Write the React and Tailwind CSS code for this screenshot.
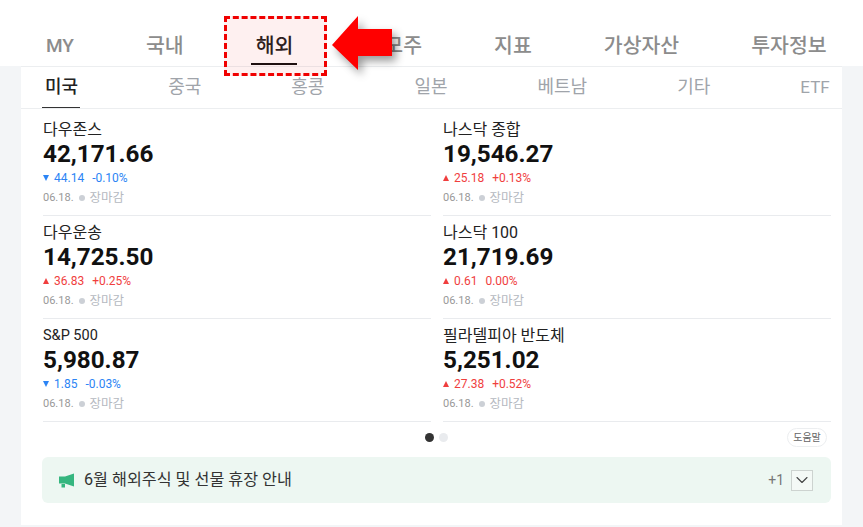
import { ChevronDown } from 'lucide-react'

const mainTabs = ['MY', '국내', '해외', '공모주', '지표', '가상자산', '투자정보']
const subTabs = ['미국', '중국', '홍콩', '일본', '베트남', '기타', 'ETF']

const markets = [
  { name: '다우존스', value: '42,171.66', diff: '44.14', rate: '-0.10%', up: false },
  { name: '나스닥 종합', value: '19,546.27', diff: '25.18', rate: '+0.13%', up: true },
  { name: '다우운송', value: '14,725.50', diff: '36.83', rate: '+0.25%', up: true },
  { name: '나스닥 100', value: '21,719.69', diff: '0.61', rate: '0.00%', up: true },
  { name: 'S&P 500', value: '5,980.87', diff: '1.85', rate: '-0.03%', up: false, latin: true },
  { name: '필라델피아 반도체', value: '5,251.02', diff: '27.38', rate: '+0.52%', up: true },
]

function MarketCell({ name, value, diff, rate, up, latin }) {
  return (
    <div className="flex h-[103px] flex-col border-b border-[#e9ebee] pt-[7px]">
      <div className={`leading-[20px] text-[#222] ${latin ? 'text-[14.5px]' : 'text-[16px]'}`}>{name}</div>
      <div className="text-[24.25px] font-bold leading-[28px] text-[#111]">{value}</div>
      <div
        className={`mt-[1px] flex items-center text-[12px] leading-[18px] ${
          up ? 'text-[#f03e3e]' : 'text-[#2b84f5]'
        }`}
      >
        <span
          className={`mr-[5px] h-0 w-0 border-x-[3.5px] border-x-transparent ${
            up ? 'border-b-[6px] border-b-[#f03e3e]' : 'border-t-[6px] border-t-[#2b84f5]'
          }`}
        />
        <span>{diff}</span>
        <span className="ml-[8px]">{rate}</span>
      </div>
      <div className="mt-[2px] flex items-center text-[11px] leading-[18px] text-[#999]">
        <span>06.18.</span>
        <span className="mx-[5px] h-[6px] w-[6px] rounded-full bg-[#ccd0d6]" />
        <span className="text-[12.5px] text-[#b5b9bf]">장마감</span>
      </div>
    </div>
  )
}

export default function App() {
  return (
    <div className="relative h-[527px] w-[863px] overflow-hidden bg-white font-['Roboto','Noto_Sans_CJK_KR',sans-serif]">
      <div className="flex h-[66px] gap-[72px] pl-[46px] pt-[32px]">
        {mainTabs.map((tab) => (
          <div
            key={tab}
            className={`relative whitespace-nowrap font-medium leading-[28px] ${
              tab === 'MY' ? 'text-[19px]' : 'text-[20.5px]'
            } ${tab === '해외' ? 'text-[#222]' : 'text-[#8c8c8c]'}`}
          >
            {tab}
            {tab === '해외' && (
              <span className="absolute -left-[5px] -right-[4px] top-[31px] h-[2px] bg-[#111]" />
            )}
          </div>
        ))}
      </div>

      <div className="flex h-[461px] bg-[#f3f5f7] px-[21px] pb-[2px]">
        <div className="w-[821px] border-t border-[#eceef0] bg-white">
          <div className="flex h-[42px] gap-[90px] border-b border-[#eceef0] pl-[24px]">
            {subTabs.map((tab, i) => (
              <div
                key={tab}
                className={`relative whitespace-nowrap pt-[8px] leading-[24px] ${
                  tab === 'ETF' ? 'text-[17px]' : 'text-[18px]'
                } ${i === 0 ? 'font-medium text-[#222]' : 'text-[#a0a4aa]'}`}
              >
                {tab}
                {i === 0 && (
                  <span className="absolute -left-[3px] -right-[2px] top-[40px] h-[1px] bg-[#333]" />
                )}
              </div>
            ))}
          </div>

          <div className="mt-[4px] grid grid-cols-[388px_388px] gap-x-[12px] pl-[22px]">
            {markets.map((m) => (
              <MarketCell key={m.name} {...m} />
            ))}
          </div>

          <div className="relative flex h-[35px] items-center justify-center gap-[5px] pb-[4px] pl-[9px]">
            <span className="h-[9px] w-[9px] rounded-full bg-[#333]" />
            <span className="h-[9px] w-[9px] rounded-full bg-[#e9ebee]" />
            <span className="absolute right-[15px] top-[6px] flex h-[19px] w-[40px] items-center justify-center rounded-full border border-[#eceef0] text-[10px] text-[#666]">
              도움말
            </span>
          </div>

          <div className="ml-[21px] flex h-[46px] w-[789px] items-center rounded-[6px] bg-[#edf7f2] pl-[17px] pr-[18px]">
            <svg width="15" height="15" viewBox="0 0 15 15" className="mr-[10px]">
              <path d="M0 3.5h6L15 .5v13L6 10.5H0z" fill="#35b67f" />
              <rect x="2.5" y="11" width="3.5" height="3.5" fill="#35b67f" />
            </svg>
            <span className="text-[16.2px] text-[#333]">6월 해외주식 및 선물 휴장 안내</span>
            <span className="ml-auto text-[14px] text-[#777]">+1</span>
            <span className="ml-[7px] flex h-[21px] w-[22px] items-center justify-center border border-[#cdd3d0] bg-[#f4f9f6]">
              <ChevronDown size={20} strokeWidth={1.3} className="text-[#444]" />
            </span>
          </div>
        </div>
      </div>

      <div className="absolute left-[224px] top-[16px] h-[60px] w-[103px] border-[3px] border-dashed border-[#f00000] bg-[#f00000]/[0.06]" />
      <svg
        width="80"
        height="76"
        viewBox="0 0 80 76"
        className="absolute left-[326px] top-[10px] drop-shadow-[4px_5px_4px_rgba(0,0,0,0.4)]"
      >
        <polygon points="6,35 32,6 32,19 66,19 66,46 32,46 32,60" fill="#ff0000" />
      </svg>
    </div>
  )
}
